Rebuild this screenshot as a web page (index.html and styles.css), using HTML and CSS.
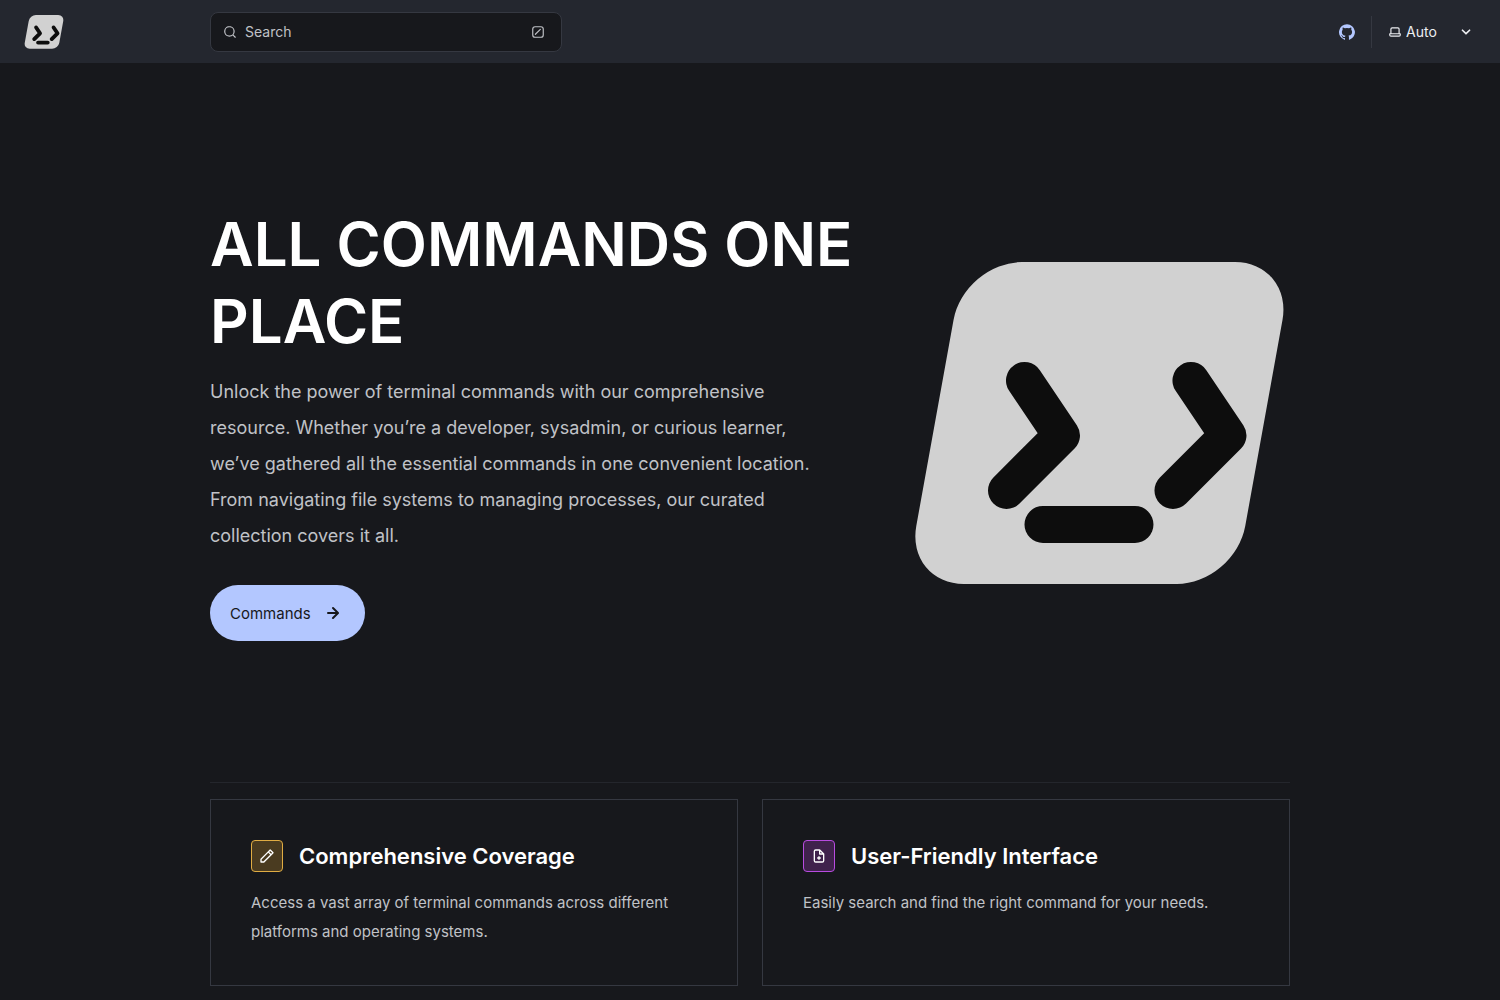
FILE: index.html
```html
<!DOCTYPE html>
<html lang="en">
<head>
<meta charset="utf-8">
<meta name="viewport" content="width=device-width, initial-scale=1">
<title>All commands one place</title>
<link rel="stylesheet" href="styles.css">
</head>
<body>
<svg class="defs" width="0" height="0" aria-hidden="true">
  <symbol id="face" viewBox="9 -7 381 381">
    <rect x="68" y="22" width="329" height="322" rx="58" transform="skewX(-10.250)" fill="#d1d1d1"/>
    <path d="M124.500 140.500 161.500 195.500 106.500 250.500M291 140.500 328 195.500 273 250.500M143 284.500H235" fill="none" stroke="#0d0d0d" stroke-width="37" stroke-linecap="round" stroke-linejoin="round"/>
  </symbol>
</svg>
<header class="header">
  <a class="brand" href="#" aria-label="Home"><svg class="brand-logo" aria-hidden="true"><use href="#face"/></svg></a>
  <div class="search-area">
    <button class="search" type="button">
      <svg class="icon-sm" viewBox="0 0 24 24" aria-hidden="true"><path d="M21.710 20.290 18 16.610A9 9 0 1 0 16.610 18l3.680 3.680a.999.999 0 0 0 1.420 0 1 1 0 0 0 0-1.390ZM11 18a7 7 0 1 1 0-14 7 7 0 0 1 0 14Z"/></svg>
      <span class="search-label">Search</span>
      <svg class="icon-sm" viewBox="0 0 24 24" aria-hidden="true"><path d="M17 2H7a5 5 0 0 0-5 5v10a5 5 0 0 0 5 5h10a5 5 0 0 0 5-5V7a5 5 0 0 0-5-5Zm3 15a3 3 0 0 1-3 3H7a3 3 0 0 1-3-3V7a3 3 0 0 1 3-3h10a3 3 0 0 1 3 3v10Z"/><path d="M15.293 6.707a1 1 0 1 1 1.414 1.414l-8.485 8.486a1 1 0 0 1-1.414-1.415l8.485-8.485Z"/></svg>
    </button>
  </div>
  <div class="tools">
    <a class="github" href="#" aria-label="GitHub"><svg class="icon-md" viewBox="0 0 24 24" aria-hidden="true"><path d="M12 .3a12 12 0 0 0-3.800 23.380c.6.120.830-.260.830-.570L9 21.070c-3.340.720-4.040-1.610-4.040-1.610-.550-1.390-1.340-1.760-1.340-1.760-1.080-.740.090-.730.090-.730 1.200.090 1.830 1.240 1.830 1.240 1.080 1.830 2.810 1.300 3.500 1 .1-.780.420-1.310.760-1.610-2.670-.3-5.470-1.330-5.470-5.930 0-1.310.470-2.380 1.240-3.220-.140-.3-.540-1.520.1-3.180 0 0 1-.320 3.300 1.230a11.500 11.500 0 0 1 6 0c2.280-1.550 3.290-1.230 3.290-1.230.640 1.660.240 2.880.120 3.180a4.650 4.650 0 0 1 1.230 3.220c0 4.610-2.800 5.630-5.480 5.920.420.360.810 1.100.810 2.220l-.010 3.290c0 .310.2.690.820.570A12 12 0 0 0 12 .3Z"/></svg></a>
    <label class="theme">
      <svg class="icon-sm" viewBox="0 0 24 24" aria-hidden="true"><path d="M21 14h-1V7a3 3 0 0 0-3-3H7a3 3 0 0 0-3 3v7H3a1 1 0 0 0-1 1v2a3 3 0 0 0 3 3h14a3 3 0 0 0 3-3v-2a1 1 0 0 0-1-1ZM6 7a1 1 0 0 1 1-1h10a1 1 0 0 1 1 1v7H6V7Zm14 10a1 1 0 0 1-1 1H5a1 1 0 0 1-1-1v-1h16v1Z"/></svg>
      <select class="theme-select" aria-label="Select theme"><option>Auto</option><option>Dark</option><option>Light</option></select>
      <svg class="icon-caret" viewBox="0 0 24 24" aria-hidden="true"><path d="M17 9.170a1 1 0 0 0-1.410 0L12 12.710 8.460 9.170a1 1 0 1 0-1.410 1.420l4.240 4.240a1.002 1.002 0 0 0 1.420 0L17 10.590a1.002 1.002 0 0 0 0-1.420Z"/></svg>
    </label>
  </div>
</header>
<main class="content">
  <section class="hero">
    <div class="hero-copy">
      <h1 class="title">ALL COMMANDS ONE PLACE</h1>
      <p class="tagline">Unlock the power of terminal commands with our comprehensive resource. Whether you’re a developer, sysadmin, or curious learner, we’ve gathered all the essential commands in one convenient location. From navigating file systems to managing processes, our curated collection covers it all.</p>
      <a class="action" href="#">Commands
        <svg class="icon-lg" viewBox="0 0 24 24" aria-hidden="true"><path d="M17.920 11.620a1.001 1.001 0 0 0-.210-.330l-5-5a1.003 1.003 0 1 0-1.420 1.420l3.300 3.290H7a1 1 0 0 0 0 2h7.590l-3.300 3.290a1.002 1.002 0 0 0 .325 1.639 1 1 0 0 0 1.095-.219l5-5a1 1 0 0 0 .210-.330 1 1 0 0 0 0-.760Z"/></svg>
      </a>
    </div>
    <svg class="hero-logo" viewBox="0 0 381 381" role="img" aria-label="Terminal face"><use href="#face"/></svg>
  </section>
  <section class="cards">
    <article class="card">
      <h2 class="card-title">
        <span class="badge badge-gold"><svg class="icon-md" viewBox="0 0 24 24" aria-hidden="true"><path d="M22 7.240a1 1 0 0 0-.290-.710l-4.240-4.240a1 1 0 0 0-1.100-.220 1 1 0 0 0-.320.220l-2.830 2.830L2.290 16.050a1 1 0 0 0-.290.710V21a1 1 0 0 0 1 1h4.240a1 1 0 0 0 .760-.290l10.870-10.930L21.710 8c.1-.1.170-.2.220-.330a1 1 0 0 0 0-.240v-.140l.070-.050ZM6.830 20H4v-2.830l9.930-9.930 2.830 2.830L6.830 20ZM18.170 8.660l-2.830-2.830 1.420-1.410 2.820 2.820-1.410 1.420Z"/></svg></span>
        Comprehensive Coverage
      </h2>
      <p class="card-text">Access a vast array of terminal commands across different platforms and operating systems.</p>
    </article>
    <article class="card">
      <h2 class="card-title">
        <span class="badge badge-purple"><svg class="icon-md" viewBox="0 0 24 24" aria-hidden="true"><path d="M20 8.940a1.300 1.300 0 0 0-.060-.270v-.090c-.050-.1-.110-.2-.190-.280l-6-6a1.070 1.070 0 0 0-.280-.190h-.090L13.060 2H7a3 3 0 0 0-3 3v14a3 3 0 0 0 3 3h10a3 3 0 0 0 3-3V8.940Zm-6-3.530L16.590 8H14V5.410ZM18 19a1 1 0 0 1-1 1H7a1 1 0 0 1-1-1V5a1 1 0 0 1 1-1h5v5a1 1 0 0 0 1 1h5v9Zm-4-5h-1v-1a1 1 0 0 0-2 0v1h-1a1 1 0 0 0 0 2h1v1a1 1 0 0 0 2 0v-1h1a1 1 0 0 0 0-2Z"/></svg></span>
        User-Friendly Interface
      </h2>
      <p class="card-text">Easily search and find the right command for your needs.</p>
    </article>
  </section>
</main>
</body>
</html>
```
FILE: styles.css
```css
* { box-sizing: border-box; margin: 0; }
body {
  background: #17181c;
  color: #c0c2c7;
  font-family: Inter, "Liberation Sans", sans-serif;
  font-size: 15px;
}
svg { fill: currentColor; flex: none; }
.defs { position: absolute; }
.icon-sm { width: 14px; height: 14px; }
.icon-md { width: 16px; height: 16px; }
.icon-caret { width: 20px; height: 20px; }
.icon-lg { width: 24px; height: 24px; }

.header {
  display: flex;
  align-items: center;
  justify-content: space-between;
  height: 63px;
  padding: 0 24px;
  background: #24272f;
  position: relative;
}
.brand, .github { display: flex; }
.brand-logo { width: 40px; height: 40px; }
.search-area {
  position: absolute;
  left: 0;
  right: 0;
  max-width: 1080px;
  margin: 0 auto;
  pointer-events: none;
}
.search {
  display: flex;
  align-items: center;
  gap: 8px;
  width: 352px;
  height: 40px;
  padding: 0 16px 0 12px;
  border: 1px solid #353841;
  border-radius: 8px;
  background: #17181c;
  color: #c0c2c7;
  font: 14px/24px Inter, "Liberation Sans", sans-serif;
  pointer-events: auto;
}
.search-label { flex: 1; text-align: left; }
.tools { display: flex; align-items: center; gap: 16px; }
.github { color: #b3c7ff; }
.theme {
  display: flex;
  align-items: center;
  gap: 4px;
  height: 32px;
  padding-left: 16px;
  border-left: 1px solid #353841;
  color: #eceef2;
}
.theme-select {
  appearance: none;
  width: 46px;
  padding: 0;
  border: 0;
  background: transparent;
  color: inherit;
  font: 14px/24px Inter, "Liberation Sans", sans-serif;
}

.content { max-width: 1080px; margin: 0 auto; padding-bottom: 14px; }
.hero {
  display: grid;
  grid-template-columns: 7fr 4fr;
  gap: 3%;
  align-items: center;
  padding: 143px 0 141px;
  border-bottom: 1px solid #24262c;
}
.hero-logo { width: 100%; height: auto; }
.title { color: #fff; font-size: 60px; line-height: 77px; font-weight: 600; }
.tagline { max-width: 624px; margin-top: 14px; font-size: 18px; line-height: 36px; }
.action {
  display: inline-flex;
  align-items: center;
  gap: 10px;
  height: 56px;
  margin-top: 31px;
  padding: 0 20px;
  border-radius: 28px;
  background: #b3c7ff;
  color: #17181c;
  text-decoration: none;
}

.cards { display: grid; grid-template-columns: 1fr 1fr; gap: 24px; margin-top: 16px; }
.card { padding: 40px 40px 39px; border: 1px solid #353841; }
.card-title {
  display: flex;
  align-items: center;
  gap: 16px;
  color: #fff;
  font-size: 22px;
  line-height: 32px;
  font-weight: 600;
}
.badge {
  display: flex;
  align-items: center;
  justify-content: center;
  width: 32px;
  height: 32px;
  border: 1px solid;
  border-radius: 4px;
}
.badge svg { color: #fff; }
.badge-gold { background: #4a3b20; border-color: #e0ac43; }
.badge-purple { background: #40224c; border-color: #b84be0; }
.card-text { margin-top: 16px; line-height: 29px; }
```
